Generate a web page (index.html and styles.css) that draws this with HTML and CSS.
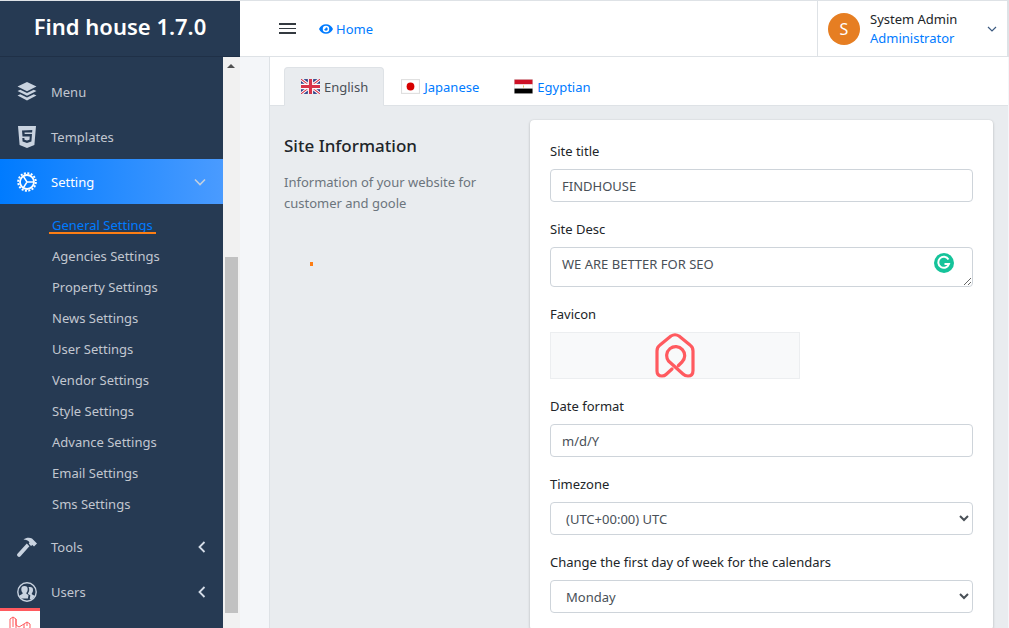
FILE: index.html
```html
<!DOCTYPE html>
<html lang="en">
<head>
    <meta charset="UTF-8">
    <meta name="viewport" content="width=device-width, initial-scale=1.0">
    <title>Find house 1.7.0</title>
    <link rel="stylesheet" href="styles.css">
</head>
<body>
    <div class="app">
        <aside class="sidebar">
            <div class="brand">Find house 1.7.0</div>
            <div class="sidebar-body">
                <nav class="side-nav">
                    <a class="nav-item" href="#">
                        <svg class="nav-icon" viewBox="0 0 20 20"><path fill="currentColor" d="M10 0l9.500 4.600L10 9.200.5 4.600zM3.300 7.700L10 11l6.700-3.300 2.800 1.400L10 13.700.5 9.100zM3.300 12.300l6.700 3.200 6.700-3.200 2.800 1.300L10 18.400.5 13.600z"/></svg>
                        <span>Menu</span>
                    </a>
                    <a class="nav-item" href="#">
                        <svg class="nav-icon html5" viewBox="0 0 20 22"><path fill="currentColor" fill-rule="evenodd" d="M1 0h18l-1.600 19L10 22l-7.400-3zM5 4.500l.5 6h7.200l-.2 3.200-2.500.8-2.500-.8-.1-1.700H5.300l.3 3.400 4.400 1.500 4.400-1.500.6-7.300H7.700l-.2-1.600h7.600l.2-2.500z"/></svg>
                        <span>Templates</span>
                    </a>
                    <a class="nav-item active" href="#">
                        <svg class="nav-icon gear" viewBox="0 0 20 20"><circle cx="10" cy="10" r="7" fill="none" stroke="currentColor" stroke-width="1.800"/><circle cx="10" cy="10" r="8.800" fill="none" stroke="currentColor" stroke-width="2" stroke-dasharray="2 1.460"/><path fill="none" stroke="currentColor" stroke-width="1.400" d="M10 10H17M10 10L6.500 4.500M10 10L6.500 15.500"/></svg>
                        <span>Setting</span>
                        <svg class="nav-arrow" viewBox="0 0 12 8"><path fill="none" stroke="currentColor" stroke-width="1.600" d="M1 1.500l5 5 5-5"/></svg>
                    </a>
                    <ul class="sub-nav">
                        <li><a class="current" href="#">General Settings</a></li>
                        <li><a href="#">Agencies Settings</a></li>
                        <li><a href="#">Property Settings</a></li>
                        <li><a href="#">News Settings</a></li>
                        <li><a href="#">User Settings</a></li>
                        <li><a href="#">Vendor Settings</a></li>
                        <li><a href="#">Style Settings</a></li>
                        <li><a href="#">Advance Settings</a></li>
                        <li><a href="#">Email Settings</a></li>
                        <li><a href="#">Sms Settings</a></li>
                    </ul>
                    <a class="nav-item" href="#">
                        <svg class="nav-icon" viewBox="0 0 20 20"><path fill="currentColor" d="M6.500 2.500C9 .500 12.500 0 15 1.500l5 5-3 3-1.600-1.500-1.400 1-2.200-2.200.6-1.500C11.200 3.400 9 2.800 6.500 2.500zM9.800 6.600l2.600 2.600-8.900 10a1.800 1.800 0 0 1-2.800-2.800z"/></svg>
                        <span>Tools</span>
                        <svg class="nav-arrow left" viewBox="0 0 8 12"><path fill="none" stroke="currentColor" stroke-width="1.800" d="M6.500 1l-5 5 5 5"/></svg>
                    </a>
                    <a class="nav-item" href="#">
                        <svg class="nav-icon" viewBox="0 0 20 20"><circle cx="10" cy="10" r="9.200" fill="none" stroke="currentColor" stroke-width="1.400"/><path fill="currentColor" d="M7.500 4a3.200 3.200 0 0 1 3.200 3.400c0 1.500-.7 2.700-1.300 3.300v1l2.100 1.200-.6 3.700H3.800A8 8 0 0 1 2.500 13.500l3.100-1.800v-1C5 10 4.300 8.900 4.300 7.400A3.200 3.200 0 0 1 7.500 4zM13 5a3 3 0 0 1 3 3.200c0 1.300-.6 2.400-1.200 3v1l2.700 1.600a8 8 0 0 1-2.300 3.400h-2.400l.5-3.900-2.300-1.300v-.9c.6-.8 1.200-2 1.200-3.400 0-1-.2-1.900-.7-2.600.4-.1.9-.1 1.500-.1z"/></svg>
                        <span>Users</span>
                        <svg class="nav-arrow left" viewBox="0 0 8 12"><path fill="none" stroke="currentColor" stroke-width="1.800" d="M6.500 1l-5 5 5 5"/></svg>
                    </a>
                </nav>
                <div class="scrollbar">
                    <span class="scroll-up"></span>
                    <div class="scroll-thumb"></div>
                </div>
            </div>
        </aside>

        <div class="main">
            <header class="topbar">
                <button class="menu-toggle" type="button" aria-label="Menu"><span></span><span></span><span></span></button>
                <a class="home-link" href="#">
                    <svg viewBox="0 0 16 11" width="14" height="10"><path fill="currentColor" fill-rule="evenodd" d="M8 0c3.500 0 6.500 2.200 8 5.500C14.500 8.800 11.500 11 8 11S1.500 8.800 0 5.500C1.500 2.200 4.500 0 8 0zm0 1.800a3.700 3.700 0 1 0 0 7.400 3.700 3.700 0 0 0 0-7.400zM8 3.500a2 2 0 1 1-2 2c.7.300 1.700-.700 2-2z"/></svg>
                    Home
                </a>
                <div class="user-menu">
                    <span class="avatar">S</span>
                    <div class="user-info">
                        <div class="user-name">System Admin</div>
                        <div class="user-role">Administrator</div>
                    </div>
                    <svg class="user-arrow" viewBox="0 0 10 6"><path fill="none" stroke="currentColor" stroke-width="1.200" d="M1 1l4 4 4-4"/></svg>
                </div>
            </header>

            <div class="page">
                <div class="panel">
                    <div class="tabs">
                        <a class="tab active" href="#">
                            <svg class="flag" viewBox="0 0 18 14"><rect width="18" height="14" fill="#2b3f87"/><path stroke="#fff" stroke-width="3" d="M0 0l18 14M18 0L0 14"/><path stroke="#d8344a" stroke-width="1" d="M0 0l18 14M18 0L0 14"/><path stroke="#fff" stroke-width="5" d="M9 0v14M0 7h18"/><path stroke="#d8344a" stroke-width="3" d="M9 0v14M0 7h18"/></svg>
                            English
                        </a>
                        <a class="tab" href="#">
                            <svg class="flag" viewBox="0 0 18 14"><rect x=".5" y=".5" width="17" height="13" fill="#fff" stroke="#ddd"/><circle cx="9" cy="7" r="3.700" fill="#d60000"/></svg>
                            Japanese
                        </a>
                        <a class="tab" href="#">
                            <svg class="flag" viewBox="0 0 18 14"><rect width="18" height="14" fill="#ddd"/><rect x=".5" y=".5" width="17" height="4.500" fill="#ce1126"/><rect x=".5" y="5" width="17" height="4" fill="#fff"/><rect x=".5" y="9" width="17" height="4.500" fill="#000"/><rect x="8.500" y="6" width="1" height="2" fill="#e8c667"/></svg>
                            Egyptian
                        </a>
                    </div>
                    <div class="tab-content">
                        <div class="info-col">
                            <h3>Site Information</h3>
                            <p>Information of your website for customer and goole</p>
                        </div>
                        <form class="card">
                            <div class="form-group">
                                <label>Site title</label>
                                <input class="form-control" type="text" value="FINDHOUSE">
                            </div>
                            <div class="form-group">
                                <label>Site Desc</label>
                                <textarea class="form-control" rows="2">WE ARE BETTER FOR SEO</textarea>
                                <svg class="grammarly" viewBox="0 0 20 20"><circle cx="10" cy="10" r="10" fill="#15c39a"/><path fill="none" stroke="#fff" stroke-width="2" d="M14.500 6.500A5.500 5.500 0 1 0 15 11H10.500"/></svg>
                            </div>
                            <div class="form-group">
                                <label>Favicon</label>
                                <div class="favicon-box">
                                    <svg viewBox="0 0 40 45" width="40" height="45"><path fill="none" stroke="#ff5a5f" stroke-width="3.200" stroke-linecap="round" stroke-linejoin="round" d="M17 36L11 41.500Q9.500 43 7 43Q2 43 2 38V18Q2 14 5 12L16 3Q20 0.500 24 3L35 12Q38 14 38 18V37.500Q38 43 33 43Q30 43 28 41L13.500 28A9 9 0 1 1 27 29L23.500 32.500"/></svg>
                                </div>
                            </div>
                            <div class="form-group">
                                <label>Date format</label>
                                <input class="form-control" type="text" value="m/d/Y">
                            </div>
                            <div class="form-group">
                                <label>Timezone</label>
                                <select class="form-control"><option>(UTC+00:00) UTC</option></select>
                            </div>
                            <div class="form-group">
                                <label>Change the first day of week for the calendars</label>
                                <select class="form-control"><option>Monday</option></select>
                            </div>
                        </form>
                    </div>
                </div>
            </div>
        </div>
    </div>

    <!-- things lying over the page -->
    <span class="mark-line"></span>
    <span class="mark-dot"></span>
    <div class="debug-badge">
        <svg viewBox="0 0 22 16" width="22" height="16"><path fill="none" stroke="#ff5a5f" stroke-width="1" d="M1 3l3-2 3 2v10l3 2 5-3V8l-5 3-3-2V3M1 3v10l6 2M4 1v10M15 8l3-2 3 2v4l-3 2-3-2M18 6v4"/></svg>
    </div>
</body>
</html>
```

FILE: styles.css
```css
* {
    box-sizing: border-box;
}
html, body {
    height: 100%;
}
body {
    font-family: 'Noto Sans', sans-serif;
    font-size: 13.500px;
    margin: 0;
    overflow: hidden;
    color: #212529;
    background-color: #f4f6f9;
}
a {
    text-decoration: none;
}
.app {
    display: flex;
    height: 628px;
    border-top: 1px solid #dee2e6;
}

/* sidebar */
.sidebar {
    width: 240px;
    flex-shrink: 0;
    display: flex;
    flex-direction: column;
}
.brand {
    height: 56px;
    background-color: #263a53;
    border-bottom: 1px solid #1f3047;
    color: #fff;
    font-size: 22px;
    font-weight: 600;
    line-height: 50px;
    text-align: center;
}
.sidebar-body {
    flex: 1;
    display: flex;
    min-height: 0;
}
.side-nav {
    width: 223px;
    background-color: #263a53;
    padding-top: 12px;
}
.nav-item {
    display: flex;
    align-items: center;
    height: 45px;
    padding-left: 17px;
    padding-right: 17px;
    color: #c2c7d0;
    font-size: 13px;
}
.nav-item span {
    margin-left: 14px;
}
.nav-icon {
    width: 20px;
    height: 20px;
    flex-shrink: 0;
    color: #c9d3e0;
}
.nav-icon.html5 {
    height: 22px;
}
.nav-item.active {
    background: linear-gradient(90deg, #007bff, #4a9bff);
    color: #fff;
}
.nav-item.active .nav-icon {
    color: #fff;
}
.nav-arrow {
    margin-left: auto;
    width: 12px;
    height: 8px;
    color: #c2d0e0;
}
.nav-arrow.left {
    width: 8px;
    height: 12px;
    color: #d5dde8;
}
.sub-nav {
    list-style: none;
    margin: 0;
    padding: 6px 0 4px 52px;
}
.sub-nav li {
    height: 31px;
    line-height: 30px;
}
.sub-nav a {
    color: #c2c7d0;
    font-size: 13px;
}
.sub-nav a.current {
    color: #007bff;
}
.scrollbar {
    width: 17px;
    background-color: #f1f1f1;
    position: relative;
    padding-top: 200px;
}
.scroll-up {
    position: absolute;
    top: 7px;
    left: 4px;
    border-left: 4px solid transparent;
    border-right: 4px solid transparent;
    border-bottom: 4px solid #505050;
}
.scroll-thumb {
    height: 356px;
    margin-left: 2px;
    width: 13px;
    background-color: #c1c1c1;
}

/* top bar */
.main {
    flex: 1;
    display: flex;
    flex-direction: column;
    min-width: 0;
}
.topbar {
    height: 56px;
    display: flex;
    align-items: center;
    background-color: #fff;
    border-bottom: 1px solid #dee2e6;
    padding-left: 39px;
}
.menu-toggle {
    width: 17px;
    padding: 0;
    border: 0;
    background: none;
    display: flex;
    flex-direction: column;
    gap: 3px;
}
.menu-toggle span {
    display: block;
    height: 1.500px;
    background-color: #343a40;
}
.home-link {
    margin-left: 23px;
    color: #007bff;
    font-size: 13px;
    display: flex;
    align-items: center;
    gap: 3px;
}
.user-menu {
    margin-left: auto;
    width: 192px;
    height: 100%;
    display: flex;
    align-items: center;
    border-left: 1px solid #dee2e6;
    border-right: 2px solid #dee2e6;
    padding-left: 10px;
}
.avatar {
    width: 32px;
    height: 32px;
    border-radius: 50%;
    background-color: #e67e22;
    color: #fff;
    font-size: 16px;
    line-height: 32px;
    text-align: center;
}
.user-info {
    margin-left: 10px;
    line-height: 19px;
    font-size: 13px;
}
.user-role {
    color: #007bff;
}
.user-arrow {
    width: 10px;
    height: 6px;
    margin-left: auto;
    margin-right: 10px;
    color: #3c5a80;
}

/* page */
.page {
    flex: 1;
    padding-left: 29px;
    min-height: 0;
}
.panel {
    height: 100%;
    background-color: #e9ecef;
    border-left: 1px solid #dee2e6;
    border-right: 1px solid #f4f6f9;
    overflow: hidden;
}
.tabs {
    display: flex;
    align-items: flex-end;
    height: 49px;
    background-color: #fff;
    border-bottom: 1px solid #dee2e6;
    padding-left: 14px;
}
.tab {
    display: flex;
    align-items: center;
    gap: 4px;
    height: 39px;
    padding: 0 17px 0 16px;
    margin-bottom: -1px;
    color: #007bff;
    font-size: 13px;
    border: 1px solid transparent;
    border-radius: 4px 4px 0 0;
}
.tab.active {
    padding-right: 15px;
    color: #495057;
    background-color: #e9ecef;
    border-color: #dee2e6 #dee2e6 #e9ecef;
}
.flag {
    width: 19px;
    height: 15px;
}
.tab-content {
    display: flex;
    padding: 14px 15px 0 14px;
}
.info-col {
    width: 246px;
    flex-shrink: 0;
}
.info-col h3 {
    margin: 0;
    padding-top: 14px;
    font-size: 17px;
    font-weight: 500;
    line-height: 23px;
}
.info-col p {
    margin: 15px 0 0;
    font-size: 13px;
    line-height: 21px;
    color: #6c757d;
}
.card {
    flex: 1;
    background-color: #fff;
    border-radius: 4px;
    box-shadow: 0 0 1px rgba(0, 0, 0, .125), 0 1px 3px rgba(0, 0, 0, .2);
    padding: 21px 20px 0;
}
.form-group {
    margin-bottom: 17px;
    position: relative;
}
.form-group label {
    display: block;
    height: 18px;
    line-height: 20px;
    margin-bottom: 10px;
    font-size: 13px;
}
.form-control {
    display: block;
    width: 100%;
    height: 33px;
    padding: 0 11px;
    border: 1px solid #ced4da;
    border-radius: 4px;
    background-color: #fff;
    color: #495057;
    font-family: inherit;
    font-size: 13px;
}
textarea.form-control {
    height: 40px;
    padding-top: 6px;
    line-height: 20px;
}
.grammarly {
    position: absolute;
    right: 19px;
    top: 34px;
    width: 20px;
    height: 20px;
}
.favicon-box {
    width: 250px;
    height: 47px;
    background-color: #f8f9fa;
    border: 1px solid #eceef0;
    text-align: center;
}
.favicon-box svg {
    display: block;
    margin: 0 auto;
}

/* overlays */
.mark-line {
    position: absolute;
    left: 49px;
    top: 232px;
    width: 107px;
    height: 2px;
    background-color: #fd7e14;
}
.mark-dot {
    position: absolute;
    left: 310px;
    top: 262px;
    width: 3px;
    height: 4px;
    background-color: #fd7e14;
}
.debug-badge {
    position: absolute;
    left: 0;
    bottom: 0;
    width: 40px;
    height: 20px;
    padding: 5px 0 0 9px;
    background-color: #fff;
    border-top: 3px solid #ff5a5f;
}
```
